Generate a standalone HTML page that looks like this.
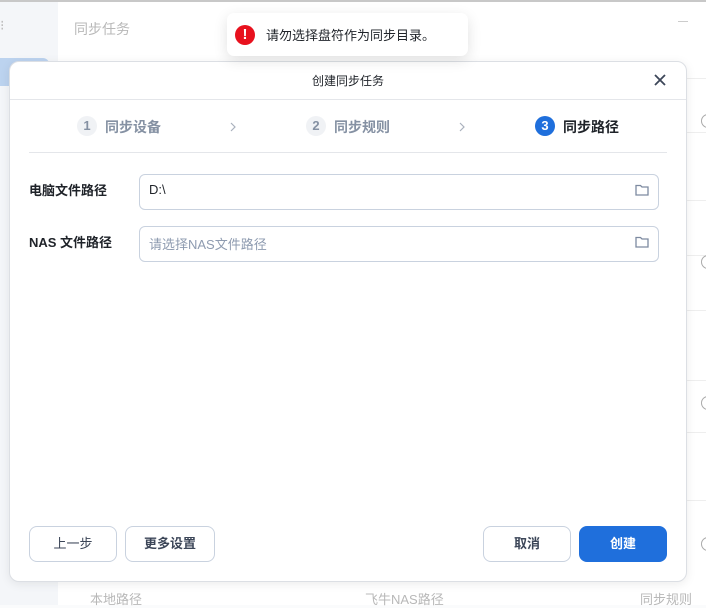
<!DOCTYPE html>
<html><head><meta charset="utf-8"><style>
*{box-sizing:border-box;margin:0;padding:0}
body{width:706px;height:605px;overflow:hidden;position:relative;background:#fafbfc;font-family:"Liberation Sans","Noto Sans CJK SC",sans-serif;font-size:14px;color:#1f2329}
.abs{position:absolute}
</style></head><body>
<div class="abs" style="left:0;top:0;width:706px;height:2px;background:#c8c8c8"></div>
<div class="abs" style="left:0;top:2px;width:58px;height:603px;background:#f4f6f9"></div>
<div class="abs" style="left:0;top:58px;width:49px;height:28px;background:#bcd3ef;border-radius:0 6px 6px 0"></div>
<div class="abs" style="left:0;top:17px;color:#bbb;font-size:14px">⁝</div>
<div class="abs" style="left:58px;top:2px;width:648px;height:603px;background:#fff"></div>
<div class="abs" style="left:74px;top:19px;color:#b8b8b8;font-size:14px">同步任务</div>
<div class="abs" style="left:678px;top:21px;width:10px;height:1px;background:#ccc"></div>
<div class="abs" style="left:686px;top:78px;width:20px;height:1px;background:#eee"></div>
<div class="abs" style="left:686px;top:132px;width:20px;height:1px;background:#eee"></div>
<div class="abs" style="left:686px;top:200px;width:20px;height:1px;background:#eee"></div>
<div class="abs" style="left:686px;top:255px;width:20px;height:1px;background:#eee"></div>
<div class="abs" style="left:686px;top:310px;width:20px;height:1px;background:#eee"></div>
<div class="abs" style="left:686px;top:380px;width:20px;height:1px;background:#eee"></div>
<div class="abs" style="left:686px;top:432px;width:20px;height:1px;background:#eee"></div>
<div class="abs" style="left:686px;top:500px;width:20px;height:1px;background:#eee"></div>
<div class="abs" style="left:701px;top:114px;width:14px;height:14px;border:1.5px solid #aaa;border-radius:50%"></div>
<div class="abs" style="left:701px;top:255px;width:14px;height:14px;border:1.5px solid #aaa;border-radius:50%"></div>
<div class="abs" style="left:701px;top:396px;width:14px;height:14px;border:1.5px solid #aaa;border-radius:50%"></div>
<div class="abs" style="left:701px;top:537px;width:14px;height:14px;border:1.5px solid #aaa;border-radius:50%"></div>
<div class="abs" style="left:90px;top:589px;color:#b8b8b8;font-size:13px">本地路径</div>
<div class="abs" style="left:365px;top:589px;color:#b8b8b8;font-size:13px">飞牛NAS路径</div>
<div class="abs" style="left:640px;top:589px;color:#b8b8b8;font-size:13px">同步规则</div>

<div class="abs" style="left:9px;top:61px;width:678px;height:521px;background:#fff;border-radius:10px;border:1px solid #dcdfe4;box-shadow:0 2px 10px rgba(0,0,0,0.08)">
  <div class="abs" style="left:0;top:0;width:676px;height:38px;border-bottom:1px solid #e4e6ea;text-align:center;line-height:38px;font-size:12px;color:#1f2329">创建同步任务</div>
  <svg class="abs" style="left:643px;top:11px" width="14" height="14" viewBox="0 0 14 14"><path d="M2 2L12 12M12 2L2 12" stroke="#3c4658" stroke-width="1.8"/></svg>
  <div class="abs" style="left:67px;top:54px;width:20px;height:20px;border-radius:50%;background:#f0f2f5;color:#8591a3;font-size:13px;font-weight:bold;text-align:center;line-height:20px">1</div>
  <div class="abs" style="left:95px;top:55px;color:#8591a3;font-size:14px;font-weight:bold">同步设备</div>
  <svg class="abs" style="left:220px;top:60px" width="6" height="10" viewBox="0 0 6 10"><path d="M1 1L5 5L1 9" fill="none" stroke="#a9b1bd" stroke-width="1.2"/></svg>
  <div class="abs" style="left:296px;top:54px;width:20px;height:20px;border-radius:50%;background:#f0f2f5;color:#8591a3;font-size:13px;font-weight:bold;text-align:center;line-height:20px">2</div>
  <div class="abs" style="left:324px;top:55px;color:#8591a3;font-size:14px;font-weight:bold">同步规则</div>
  <svg class="abs" style="left:449px;top:60px" width="6" height="10" viewBox="0 0 6 10"><path d="M1 1L5 5L1 9" fill="none" stroke="#a9b1bd" stroke-width="1.2"/></svg>
  <div class="abs" style="left:525px;top:54px;width:20px;height:20px;border-radius:50%;background:#1f6fdc;color:#fff;font-size:13px;font-weight:bold;text-align:center;line-height:20px">3</div>
  <div class="abs" style="left:553px;top:55px;color:#1f2329;font-size:14px;font-weight:bold">同步路径</div>
  <div class="abs" style="left:19px;top:90px;width:638px;height:1px;background:#e4e6ea"></div>
  <div class="abs" style="left:19px;top:118px;font-size:13px;font-weight:bold">电脑文件路径</div>
  <div class="abs" style="left:129px;top:112px;width:520px;height:36px;border:1px solid #c9d2df;border-radius:6px"></div>
  <div class="abs" style="left:139px;top:120px;font-size:13px">D:\</div>
  <div class="abs" style="left:19px;top:170px;font-size:13px;font-weight:bold">NAS 文件路径</div>
  <div class="abs" style="left:129px;top:164px;width:520px;height:36px;border:1px solid #c9d2df;border-radius:6px"></div>
  <div class="abs" style="left:139px;top:172px;font-size:13px;color:#8e9bb0">请选择NAS文件路径</div>
  <svg class="abs" style="left:625px;top:122px" width="14" height="12" viewBox="0 0 14 12"><path d="M1 1.5H5.5L7 3H13V11H1Z" fill="none" stroke="#7d8aa0" stroke-width="1.3"/></svg>
  <svg class="abs" style="left:625px;top:174px" width="14" height="12" viewBox="0 0 14 12"><path d="M1 1.5H5.5L7 3H13V11H1Z" fill="none" stroke="#7d8aa0" stroke-width="1.3"/></svg>
  <div class="abs" style="left:19px;top:464px;width:88px;height:36px;border:1px solid #c9d2df;border-radius:8px;text-align:center;line-height:34px;font-size:13px;color:#3c4658">上一步</div>
  <div class="abs" style="left:115px;top:464px;width:90px;height:36px;border:1px solid #c9d2df;border-radius:8px;text-align:center;line-height:34px;font-size:13px;color:#3c4658;font-weight:bold">更多设置</div>
  <div class="abs" style="left:473px;top:464px;width:88px;height:36px;border:1px solid #c9d2df;border-radius:8px;text-align:center;line-height:34px;font-size:13px;color:#3c4658;font-weight:bold">取消</div>
  <div class="abs" style="left:569px;top:464px;width:88px;height:36px;background:#1f6fdc;border-radius:8px;text-align:center;line-height:36px;font-size:13px;color:#fff;font-weight:bold">创建</div>
</div>

<div class="abs" style="left:227px;top:13px;width:241px;height:43px;background:#fff;border-radius:7px;box-shadow:0 4px 14px rgba(0,0,0,0.12)">
  <div class="abs" style="left:8px;top:12px;width:20px;height:20px;border-radius:50%;background:#e8111e;color:#fff;text-align:center;line-height:20px;font-weight:bold;font-size:15px">!</div>
  <div class="abs" style="left:39px;top:12px;font-size:13px;color:#1f2329">请勿选择盘符作为同步目录。</div>
</div>
</body></html>
